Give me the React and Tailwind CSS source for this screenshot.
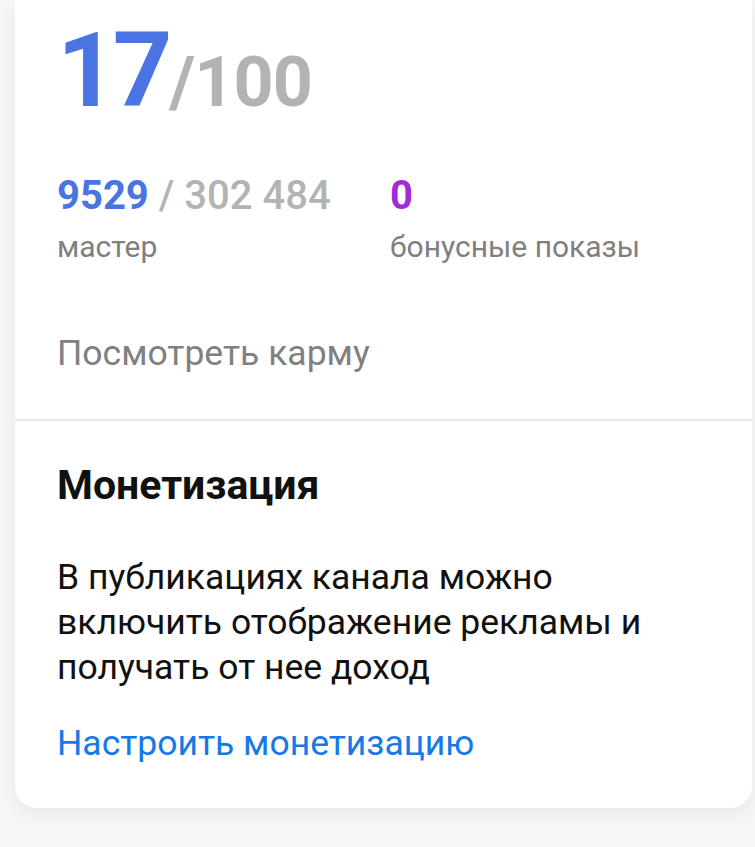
export default function App() {
  return (
    <div className="w-[755px] h-[847px] bg-[#f6f6f6] overflow-hidden" style={{ fontFamily: 'Roboto, "Noto Sans", sans-serif' }}>
      <div className="ml-[15px] w-[737px] bg-white rounded-b-[22px] shadow-[0_6px_18px_rgba(0,0,0,0.06)]">
        <div className="pl-[42px] pt-[19px]">
          <div className="flex items-baseline">
            <span className="text-[104px] leading-[1] font-bold text-[#4a74e2] tracking-[-4px]">17</span>
            <span className="text-[70px] leading-[1] font-bold text-[#b3b3b3] ml-[1px] tracking-[-1px]">/100</span>
          </div>
          <div className="flex mt-[53px]">
            <div className="w-[333px]">
              <div className="text-[40px] leading-[40px] font-medium">
                <span className="text-[#4a74e2] font-bold">9529</span>
                <span className="text-[#b3b3b3]"> / 302 484</span>
              </div>
              <div className="text-[30px] leading-[34px] text-[#808080] mt-[14px]">мастер</div>
            </div>
            <div>
              <div className="text-[40px] leading-[40px] font-bold text-[#a32ad8]">0</div>
              <div className="text-[30px] leading-[34px] text-[#808080] mt-[14px]">бонусные показы</div>
            </div>
          </div>
          <div className="text-[35.5px] leading-[40px] text-[#808080] mt-[69px]">Посмотреть карму</div>
        </div>
        <div className="h-[2px] bg-[#e8e8e8] mt-[46px]"></div>
        <div className="pl-[42px] pr-[30px] pt-[42px] pb-[45px]">
          <div className="text-[41px] leading-[44px] font-bold text-[#111]">Монетизация</div>
          <div className="text-[35.5px] leading-[45px] text-[#111] mt-[48px]">
            В публикациях канала можно<br />включить отображение рекламы и<br />получать от нее доход
          </div>
          <div className="text-[35.5px] leading-[40px] text-[#1679e6] mt-[33px]">Настроить монетизацию</div>
        </div>
      </div>
    </div>
  );
}
